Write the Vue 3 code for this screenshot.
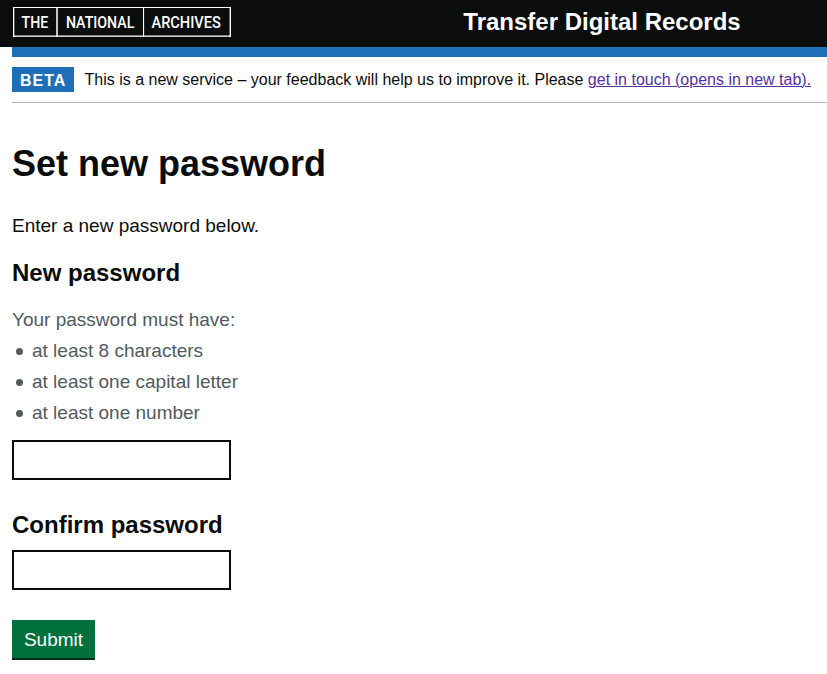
<script setup>
import { ref } from 'vue'
const rules = ['at least 8 characters', 'at least one capital letter', 'at least one number']
const password = ref('')
const confirm = ref('')
</script>

<template>
  <div class="page">
    <header class="header">
      <svg class="logo" width="218" height="30" viewBox="0 0 218 30" role="img" aria-label="The National Archives">
        <g fill="#fff">
          <rect width="218" height="1" />
          <rect width="1.300" height="30" />
          <rect x="43.250" width="1.500" height="30" />
          <rect x="130" width="1.100" height="30" />
          <rect x="216.600" width="1.400" height="30" />
          <rect y="28.500" width="218" height="1.300" />
        </g>
        <g class="logo-text">
          <text x="8.600" y="20.900" textLength="26.700" lengthAdjust="spacingAndGlyphs">THE</text>
          <text x="52.900" y="20.900" textLength="68.500" lengthAdjust="spacingAndGlyphs">NATIONAL</text>
          <text x="138.500" y="20.900" textLength="69.300" lengthAdjust="spacingAndGlyphs">ARCHIVES</text>
        </g>
      </svg>
      <div class="service">Transfer Digital Records</div>
    </header>
    <div class="container">
      <div class="bar"></div>
      <div class="phase">
        <strong class="tag">BETA</strong>
        <span class="phase-text">This is a new service – your feedback will help us to improve it. Please <a href="#">get in touch (opens in new tab).</a></span>
      </div>
      <main>
        <h1>Set new password</h1>
        <p class="intro">Enter a new password below.</p>
        <form @submit.prevent>
          <h2><label for="pw">New password</label></h2>
          <div class="hint">
            <p>Your password must have:</p>
            <ul><li v-for="r in rules" :key="r">{{ r }}</li></ul>
          </div>
          <input id="pw" v-model="password" type="password">
          <h2 class="second"><label for="pw2">Confirm password</label></h2>
          <input id="pw2" v-model="confirm" type="password">
          <button type="submit">Submit</button>
        </form>
      </main>
    </div>
  </div>
</template>

<style>
body { background: #fff; overflow: hidden; }
</style>

<style scoped>
.page { font-family: "Liberation Sans", Arial, sans-serif; color: #0b0c0c; height: 674px; overflow: hidden; }
.header { background: #0b0c0c; height: 47px; display: flex; color: #fff; box-sizing: border-box; padding: 7px 0 0 13px; }
.logo { display: block; flex: none; }
.logo-text { font: 500 16.300px Roboto, sans-serif; fill: #fff; }
.service { font-size: 24px; line-height: 30px; font-weight: 700; margin-left: 232.300px; white-space: nowrap; }
.container { margin-left: 12px; }
.bar { height: 10px; background: #1d70b8; }
.phase { height: 46px; box-sizing: border-box; border-bottom: 1px solid #b1b4b6; display: flex; padding-top: 10px; }
.tag { background: #1d70b8; color: #fff; width: 62px; height: 25px; box-sizing: border-box; padding-left: 8px; font-size: 16px; line-height: 27px; letter-spacing: 1px; flex: none; }
.phase-text { font-size: 16px; line-height: 25px; margin-left: 10.500px; white-space: nowrap; }
a { color: #54319f; text-decoration: underline; text-underline-offset: 1px; text-decoration-thickness: 1px; }
h1 { margin: 41px 0 0; font-size: 36px; line-height: 40px; font-weight: 700; }
.intro { margin: 29px 0 0; font-size: 19px; line-height: 25px; }
h2 { margin: 20px 0 0; font-size: 24px; line-height: 30px; font-weight: 700; }
.hint { color: #505a5f; font-size: 19px; line-height: 25px; margin-top: 19px; }
.hint p { margin: 0; }
ul { margin: 0; padding: 0; list-style: none; }
li { margin-top: 6px; display: flex; align-items: center; }
li::before { content: ""; width: 7px; height: 7px; margin: 1px 9.500px 0 3.500px; border-radius: 50%; background: #505a5f; }
input { display: block; box-sizing: border-box; width: 219px; height: 40px; border: 2px solid #0b0c0c; border-radius: 0; margin: 15px 0 0; padding: 5px; font: 19px "Liberation Sans", sans-serif; background: #fff; }
h2.second { margin-top: 30px; }
.second + input { margin-top: 10px; }
button { display: block; margin: 30px 0 0; width: 83px; height: 40px; padding: 0; border: 0; border-radius: 0; background: #00703c; color: #fff; font: 19px/38px "Liberation Sans", sans-serif; box-shadow: inset 0 -2px 0 #002d18; }
</style>
